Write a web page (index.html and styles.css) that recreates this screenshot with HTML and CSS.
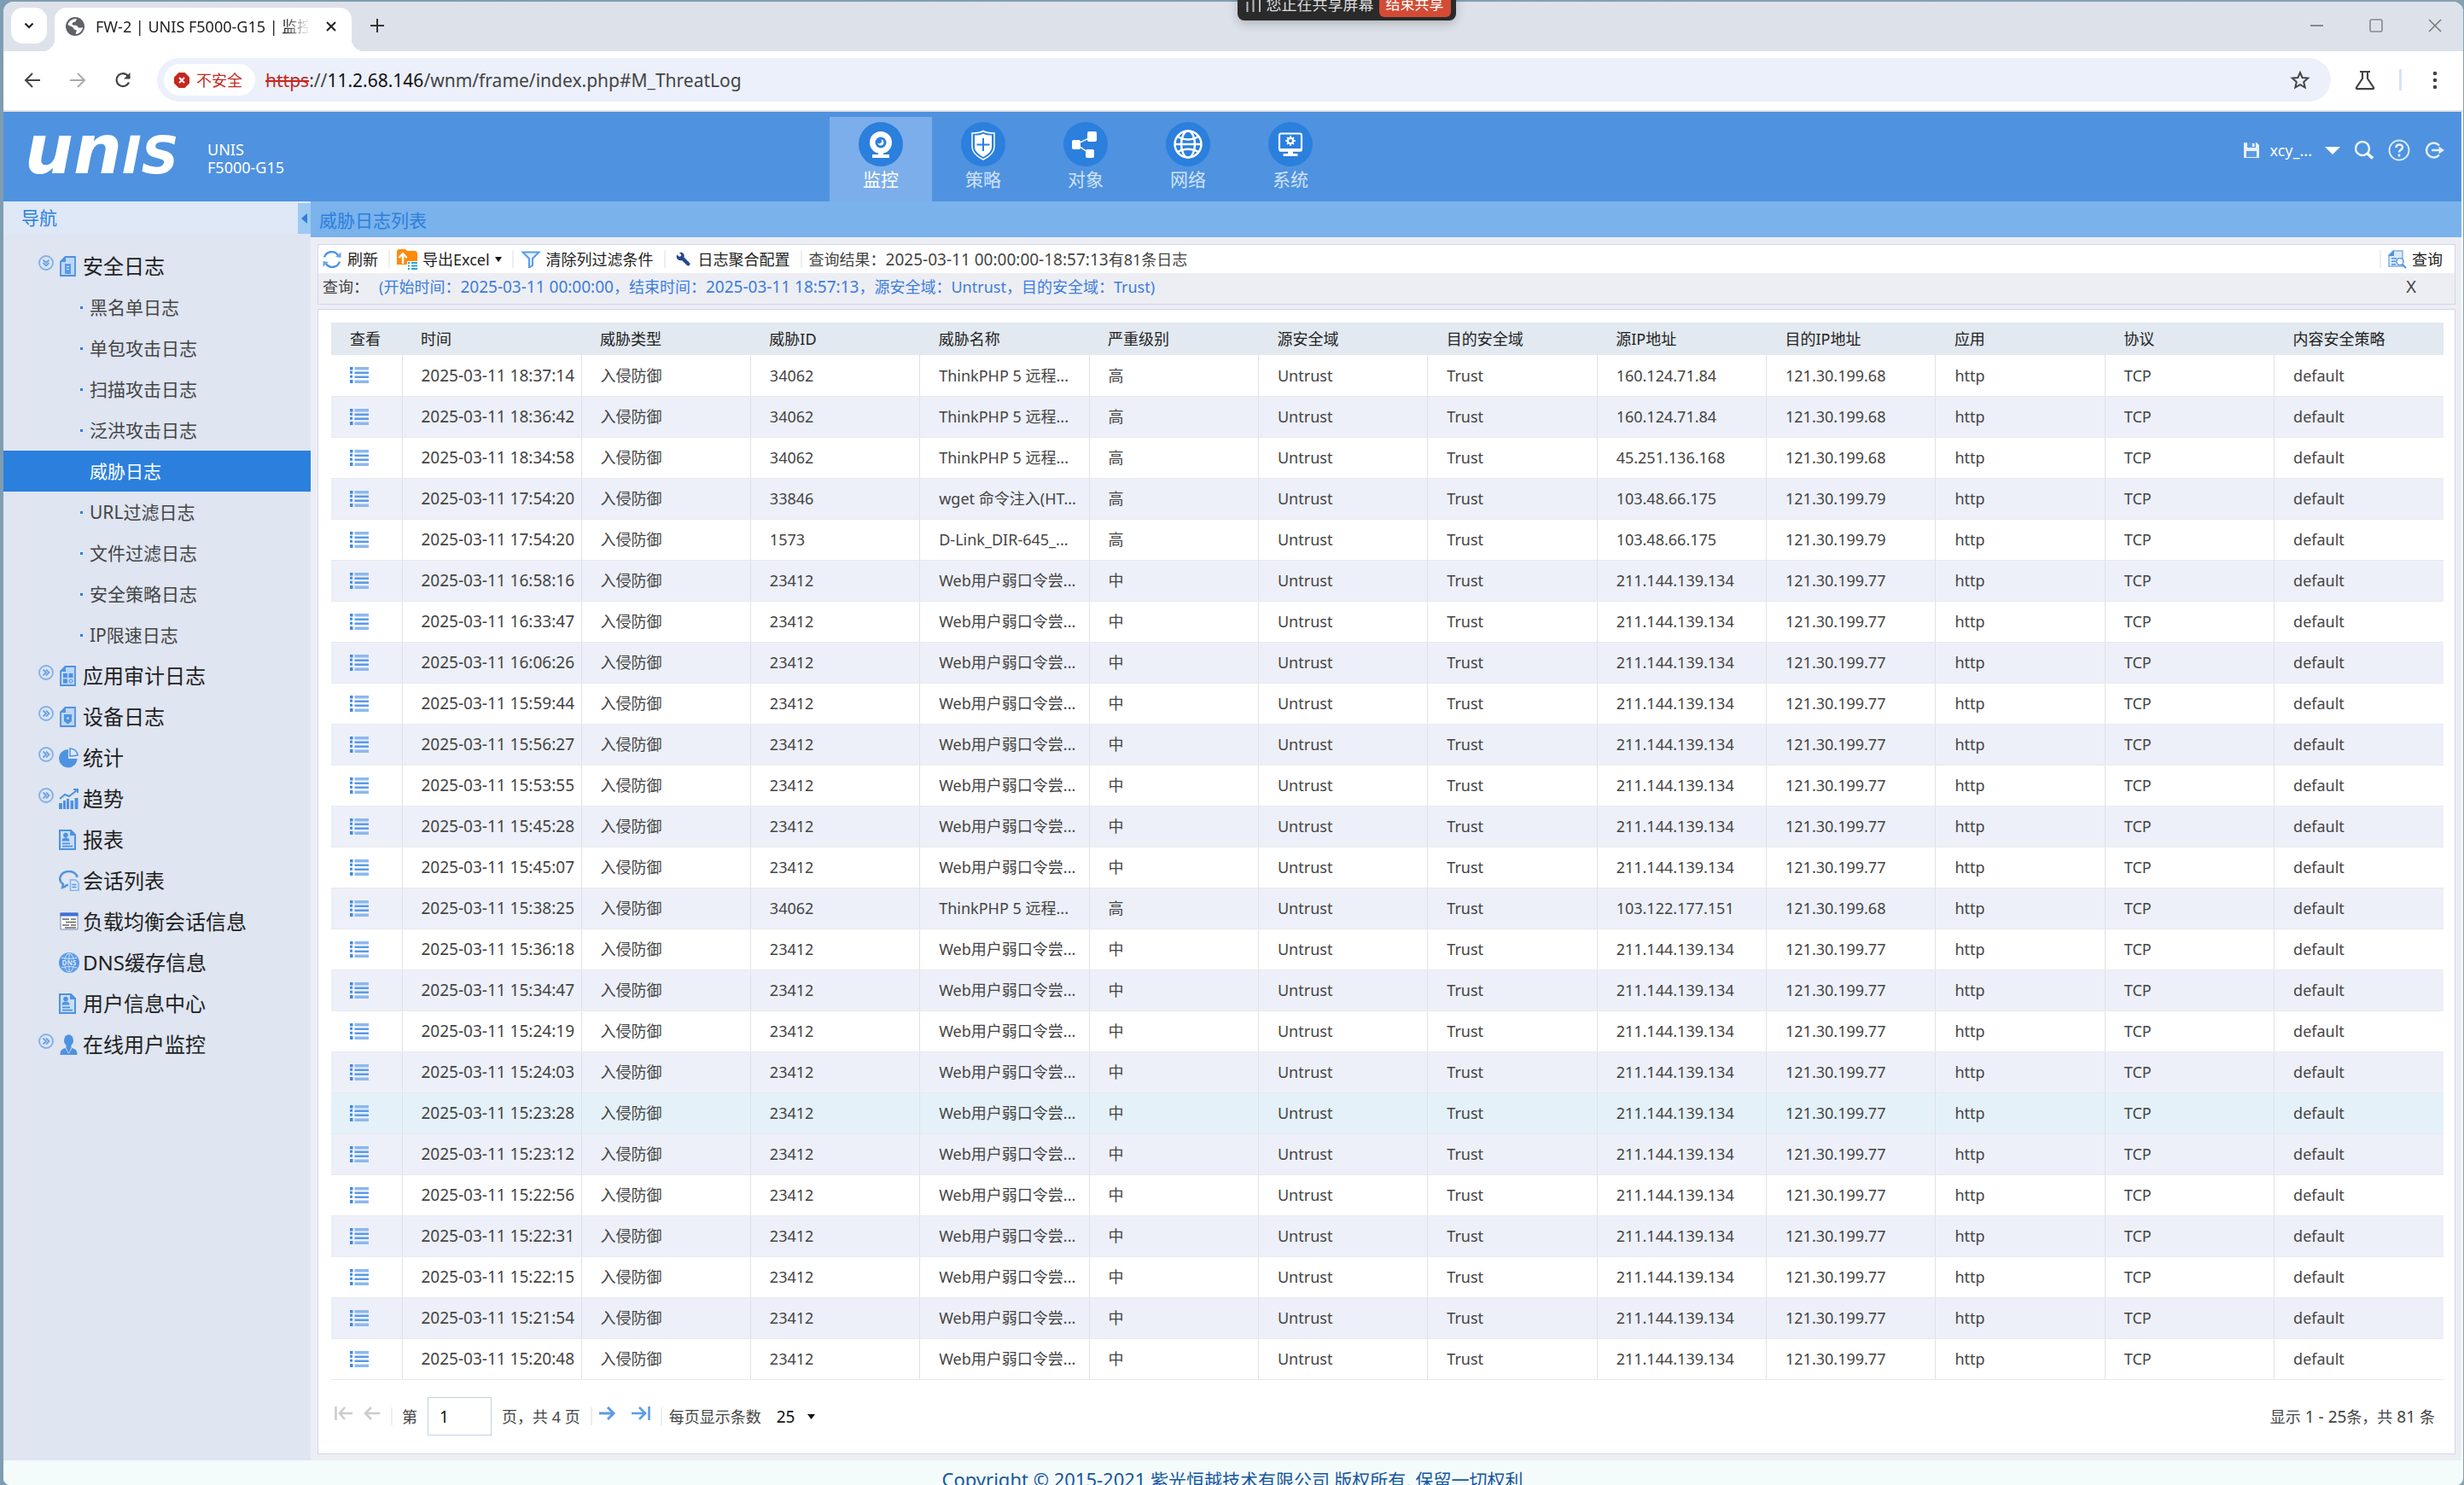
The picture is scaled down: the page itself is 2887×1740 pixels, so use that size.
FILE: index.html
```html
<!DOCTYPE html>
<html lang="zh-CN">
<head>
<meta charset="utf-8">
<title>FW-2 | UNIS F5000-G15 | 监控</title>
<link rel="stylesheet" href="styles.css">
</head>
<body>
<svg class="defs" aria-hidden="true">
  <symbol id="i-expand" viewBox="0 0 18 18"><circle cx="9" cy="9" r="8" fill="none" stroke="#7fb0ea" stroke-width="1.8"/><path d="M5.500 5.500 9 9l-3.500 3.500M9 5.500 12.500 9 9 12.500" fill="none" stroke="#6aa3e6" stroke-width="1.800"/></symbol>
  <symbol id="i-collapse" viewBox="0 0 18 18"><circle cx="9" cy="9" r="8" fill="none" stroke="#7fb0ea" stroke-width="1.8"/><path d="M5.500 5.500 9 9l3.500-3.500M5.500 9 9 12.500 12.500 9" fill="none" stroke="#6aa3e6" stroke-width="1.8"/></symbol>
  <symbol id="i-doc" viewBox="0 0 24 24"><path d="M7.500 1H19v22H2V6.500z" fill="#bfd7f5" stroke="#4f92e0" stroke-width="1.800"/><path d="M1.500 7 8 .5V7z" fill="#4f92e0"/></symbol>
  <symbol id="i-report" viewBox="0 0 24 24"><path d="M1 1h13l5 5v17H1z" fill="#c9def7" stroke="#4f92e0" stroke-width="2"/><path d="M13 0v7h7z" fill="#4f92e0"/><circle cx="8" cy="6.500" r="2.800" fill="#4f92e0"/><path d="M3.500 13.500c0-3 2-4 4.500-4s4.500 1 4.500 4zM4 15.500h9v1.800H4zM4 18.800h12v1.800H4z" fill="#4f92e0"/></symbol>
  <symbol id="i-list" viewBox="0 0 22 19"><path d="M0 0h3.500v3.500H0zM0 4.800h3v3H0zM0 9.800h3v3H0zM0 15h3.500v4H0z" fill="#3f8ae0"/><path d="M5.500 0h16.500v3.500H5.500zM5.500 15.500h16.500V19H5.500z" fill="#8db8ed"/><path d="M5.500 5.500h16.500v2.500H5.500zM5.500 10.500h16.500v2.500H5.500z" fill="#5b9ae6"/></symbol>
</svg>

<div class="window">
  <div class="tabstrip">
    <button class="tab-search" aria-label="搜索标签页"><svg width="12" height="12" viewBox="0 0 12 12"><path d="m1.500 3.500 4.500 4.500 4.500-4.500" fill="none" stroke="#222" stroke-width="2.200"/></svg></button>
    <div class="tab">
      <svg width="22" height="22" viewBox="0 0 22 22"><circle cx="11" cy="11" r="11" fill="#5f6368"/><path d="M13 2c-1 2.500-1 3.500-3.500 4-2 .5-2.500 2-1.500 3s2.500.5 4 .8c2 .4 2 2.200 3.500 2.700s4-.5 4.500 0c-1 4-4 7-8 7.500-1-2 1.500-3 .5-4.500-1-1-3-.5-3.500-2.500C8.500 11 4 10.500 2.500 9 3.500 4.500 8 1.500 13 2z" fill="#fff"/></svg>
      <span class="tab-title">FW-2 | UNIS F5000-G15 | 监控</span>
      <button class="plain" aria-label="关闭标签页"><svg width="14" height="14" viewBox="0 0 14 14"><path d="m2 2 10 10M12 2 2 12" stroke="#222" stroke-width="2"/></svg></button>
    </div>
    <button class="plain new-tab" aria-label="新标签页"><svg width="16" height="16" viewBox="0 0 16 16"><path d="M8 0v16M0 8h16" stroke="#333" stroke-width="2"/></svg></button>
    <div class="win-controls">
      <button class="plain" aria-label="最小化"><svg width="16" height="16" viewBox="0 0 16 16"><path d="M0 8h15" stroke="#888" stroke-width="2"/></svg></button>
      <button class="plain" aria-label="最大化"><svg width="16" height="16" viewBox="0 0 16 16"><rect x="1" y="1" width="14" height="14" rx="2" fill="none" stroke="#888" stroke-width="1.600"/></svg></button>
      <button class="plain" aria-label="关闭"><svg width="16" height="16" viewBox="0 0 16 16"><path d="m1 1 14 14M15 1 1 15" stroke="#777" stroke-width="1.500"/></svg></button>
    </div>
  </div>

  <div class="addressbar">
    <button class="plain" aria-label="后退"><svg width="20" height="20" viewBox="0 0 20 20"><path d="M19 10H2M10 2l-8 8 8 8" fill="none" stroke="#444" stroke-width="2"/></svg></button>
    <button class="plain" aria-label="前进"><svg width="20" height="20" viewBox="0 0 20 20"><path d="M1 10h17M10 2l8 8-8 8" fill="none" stroke="#aaa" stroke-width="2"/></svg></button>
    <button class="plain" aria-label="重新加载"><svg width="20" height="20" viewBox="0 0 20 20"><path d="M17 12.500A7.500 7.500 0 1 1 16 5l2 2.500" fill="none" stroke="#444" stroke-width="2.200"/><path d="M18.500 1v7.500H11z" fill="#444"/></svg></button>
    <div class="omnibox">
      <button class="chip"><svg width="18" height="18" viewBox="0 0 18 18"><path d="M5.500 0h7L18 5.500v7L12.500 18h-7L0 12.500v-7z" fill="#c5281f"/><path d="m6 6 6 6M12 6l-6 6" stroke="#fff" stroke-width="2"/></svg>不安全</button>
      <div class="url" role="textbox" aria-label="地址栏"><s>https</s>://<b>11.2.68.146</b>/wnm/frame/index.php#M_ThreatLog</div>
      <button class="plain" aria-label="收藏"><svg width="24" height="24" viewBox="0 0 24 24"><path d="m12 3 2.600 6 6.600.6-5 4.400 1.500 6.500L12 17.100l-5.700 3.400L7.800 14l-5-4.400L9.400 9z" fill="none" stroke="#444" stroke-width="2"/></svg></button>
    </div>
    <button class="plain flask" aria-label="实验"><svg width="24" height="24" viewBox="0 0 24 24"><path d="M6 2h12M9 2v8L2 20.500c-.5 1 0 1.700 1 1.700h18c1 0 1.500-.7 1-1.700L15 10V2" fill="none" stroke="#444" stroke-width="2.200"/></svg></button>
    <span class="tool-divider"></span>
    <button class="plain" aria-label="菜单"><svg width="6" height="22" viewBox="0 0 6 22"><g fill="#444"><circle cx="3" cy="3" r="2.300"/><circle cx="3" cy="11" r="2.300"/><circle cx="3" cy="19" r="2.300"/></g></svg></button>
  </div>

  <header class="app-header">
    <div class="brand">
      <div class="logo"><span class="logo-low">un</span><span class="logo-cap">IS</span></div>
      <div class="device">UNIS<br>F5000-G15</div>
    </div>
    <nav class="top-nav">
      <a href="#M" class="active"><svg width="52" height="52" viewBox="0 0 52 52"><circle cx="26" cy="26" r="26" fill="#2b7fdd"/><circle cx="26" cy="24" r="13" fill="#fff"/><circle cx="26" cy="24" r="6.500" fill="#2b7fdd"/><path d="M26 20.500a3.500 3.500 0 1 1-3.500 4 2.500 2.500 0 0 0 3.500-4z" fill="#fff"/><path d="M23 36h6v2h7v4H16v-4h7z" fill="#fff"/></svg>监控</a>
      <a href="#P"><svg width="52" height="52" viewBox="0 0 52 52"><circle cx="26" cy="26" r="26" fill="#2b7fdd"/><path d="M26 10.500c4 2.500 9 2.500 13 2.500v16c0 7-6 11.500-13 15-7-3.500-13-8-13-15V13c4 0 9 0 13-2.500z" fill="none" stroke="#fff" stroke-width="1.500"/><path d="M26 13.500c3 2 7 2 10 2V29c0 5-4 8.500-10 12-6-3.500-10-7-10-12V15.500c3 0 7 0 10-2z" fill="#fff"/><path d="M26 19v15M18.500 26.500h15" stroke="#2b7fdd" stroke-width="2"/></svg>策略</a>
      <a href="#O"><svg width="52" height="52" viewBox="0 0 52 52"><circle cx="26" cy="26" r="26" fill="#2b7fdd"/><path d="M34 17 15 26l16 11" fill="none" stroke="#fff" stroke-width="1.500"/><rect x="28" y="11" width="11" height="12" rx="2" fill="#fff"/><rect x="10" y="21" width="10" height="11" rx="2" fill="#fff"/><rect x="26" y="32" width="10" height="10" rx="2" fill="#fff"/></svg>对象</a>
      <a href="#N"><svg width="52" height="52" viewBox="0 0 52 52"><circle cx="26" cy="26" r="26" fill="#2b7fdd"/><g fill="none" stroke="#fff" stroke-width="2.500"><circle cx="26" cy="26" r="15.500"/><ellipse cx="26" cy="26" rx="8" ry="15.500"/><path d="M10.500 26h31M14 17c7 4.500 17 4.500 24 0M14 35c7-4.500 17-4.500 24 0"/></g></svg>网络</a>
      <a href="#S"><svg width="52" height="52" viewBox="0 0 52 52"><circle cx="26" cy="26" r="26" fill="#2b7fdd"/><rect x="13" y="13.500" width="26" height="20" rx="2" fill="none" stroke="#fff" stroke-width="2.200"/><path d="M13 31h26v3.500H13zM23 34h6v3h5.500v3h-17v-3H23z" fill="#fff"/><circle cx="26" cy="22" r="3.200" fill="none" stroke="#fff" stroke-width="2.400"/><path d="M26 16v12M20 22h12M22 18l8 8M30 18l-8 8" stroke="#fff" stroke-width="1.600"/><circle cx="26" cy="22" r="2" fill="#2b7fdd"/></svg>系统</a>
    </nav>
    <div class="user-tools">
      <button class="plain" aria-label="保存"><svg width="20" height="20" viewBox="0 0 20 20"><path d="M1 1h15l3 3v15H1z" fill="#e8f1fc"/><path d="M5 1h10v6H5zM4 11h12v7H4z" fill="#5c9ae3"/><path d="M11 2h2.500v4H11z" fill="#fff"/></svg></button>
      <button class="user">xcy_... <svg width="18" height="9" viewBox="0 0 18 9"><path d="M0 0h18L9 9z" fill="#fff"/></svg></button>
      <button class="plain" aria-label="搜索"><svg width="24" height="24" viewBox="0 0 24 24"><circle cx="10" cy="10" r="8" fill="none" stroke="#eaf3fd" stroke-width="2.500"/><path d="m16 16 6 5.500" stroke="#fff" stroke-width="3.500"/></svg></button>
      <button class="plain" aria-label="帮助"><svg width="26" height="26" viewBox="0 0 26 26"><circle cx="13" cy="13" r="11.500" fill="none" stroke="#d7e7fa" stroke-width="2"/><path d="M9.500 10c0-4.500 7.500-4.500 7.500-.5 0 3-4 3-4 6M13 17.500v3" fill="none" stroke="#e4effc" stroke-width="2.600"/></svg></button>
      <button class="plain" aria-label="退出"><svg width="24" height="22" viewBox="0 0 24 22"><path d="M18 5.500a8.500 8.500 0 1 0 0 11" fill="none" stroke="#e4effc" stroke-width="2.500"/><path d="M9 11h11" stroke="#e4effc" stroke-width="2.500"/><path d="m17.500 6.500 6.500 4.500-6.500 4.500z" fill="#e4effc"/></svg></button>
    </div>
  </header>

  <div class="app-body">
    <aside class="sidebar">
      <div class="sidebar-head"><span>导航</span><button class="fold" aria-label="收起导航"><svg width="7" height="12" viewBox="0 0 7 12"><path d="M7 0v12L0 6z" fill="#2b7fdd"/></svg></button></div>
      <nav class="tree">
        <a href="#log" class="node"><svg class="toggle"><use href="#i-collapse"/></svg><svg class="ico" viewBox="0 0 24 24"><use href="#i-doc"/><path d="M7 9h7v12H7z" fill="#5b9ae6"/><path d="M9 7.500h3V9H9zM9 12h3v1H9zM9 15h3v1H9z" fill="#dbe8f9"/></svg>安全日志</a>
        <a href="#l1" class="leaf">黑名单日志</a>
        <a href="#l2" class="leaf">单包攻击日志</a>
        <a href="#l3" class="leaf">扫描攻击日志</a>
        <a href="#l4" class="leaf">泛洪攻击日志</a>
        <a href="#M_ThreatLog" class="leaf current">威胁日志</a>
        <a href="#l6" class="leaf">URL过滤日志</a>
        <a href="#l7" class="leaf">文件过滤日志</a>
        <a href="#l8" class="leaf">安全策略日志</a>
        <a href="#l9" class="leaf">IP限速日志</a>
        <a href="#n2" class="node"><svg class="toggle"><use href="#i-expand"/></svg><svg class="ico" viewBox="0 0 24 24"><use href="#i-doc"/><path d="M5 9h5v5H5zM11.500 9h5v5h-5zM5 15.500h5v5H5z" fill="#4f92e0"/><circle cx="14" cy="18" r="2" fill="none" stroke="#4f92e0"/></svg>应用审计日志</a>
        <a href="#n3" class="node"><svg class="toggle"><use href="#i-expand"/></svg><svg class="ico" viewBox="0 0 24 24"><use href="#i-doc"/><path d="M6 9h9v8l-4.500 3.500L6 17z" fill="#4f92e0"/><circle cx="10.500" cy="13.500" r="1.500" fill="#bfd7f5"/></svg>设备日志</a>
        <a href="#n4" class="node"><svg class="toggle"><use href="#i-expand"/></svg><svg class="ico" viewBox="0 0 24 24"><path d="M11 2v11h10.500A10.700 10.700 0 1 1 11 2z" fill="#4f92e0"/><path d="M13 1c5 0 9 4 9 8l-9 1z" fill="#dfe9f8" stroke="#4f92e0" stroke-width="1.500"/></svg>统计</a>
        <a href="#n5" class="node"><svg class="toggle"><use href="#i-expand"/></svg><svg class="ico" viewBox="0 0 24 24"><path d="M0 17h4v7H0zM5 14h3v10H5zM9 12h3v12H9zM13.500 14h3.500v10h-3.500zM18.500 11h4v13h-4z" fill="#4f92e0"/><path d="m1 12 6-5 5 2 9-7M17 1h5v4" fill="none" stroke="#4f92e0" stroke-width="2"/></svg>趋势</a>
        <a href="#n6" class="node solo"><svg class="ico"><use href="#i-report"/></svg>报表</a>
        <a href="#n7" class="node solo"><svg class="ico" viewBox="0 0 24 24"><path d="M11 17c-2 0-3 0-4 2l-3 1 1-4C-3 10 3 1 12 1c5 0 9 3 9.500 7" fill="none" stroke="#4f92e0" stroke-width="2.400"/><path d="M13.500 11h6l3.500 3.500v9h-9.500z" fill="#dbe8f9" stroke="#7fb0ea" stroke-width="1.500"/><path d="M15.500 16.500h5M15.500 19.500h5" stroke="#4f92e0" stroke-width="1.500"/></svg>会话列表</a>
        <a href="#n8" class="node solo"><svg class="ico" viewBox="0 0 24 24"><path d="M2 2h20v19H2z" fill="#fff" stroke="#7189b5"/><path d="M1.500 1.500h21v4h-21z" fill="#3f6fd6"/><path d="M4 9h8M14 9h6M8 12.500h12M4 16h8M14 16h6M7 19h13" stroke="#666" stroke-width="1.600"/></svg>负载均衡会话信息</a>
        <a href="#n9" class="node solo"><svg class="ico" viewBox="0 0 24 24"><circle cx="12" cy="12" r="12" fill="#5f9de6"/><g fill="none" stroke="#cfe1f8" stroke-width="1"><ellipse cx="12" cy="12" rx="5.500" ry="11"/><path d="M12 1v22M3 6c6 2 12 2 18 0M3 18c6-2 12-2 18 0"/></g><path d="M1 8.500h22v7H1z" fill="#4f92e0"/><text x="12" y="15" font-size="8" font-weight="700" text-anchor="middle" fill="#dfe9f8">DNS</text></svg>DNS缓存信息</a>
        <a href="#n10" class="node solo"><svg class="ico"><use href="#i-report"/></svg>用户信息中心</a>
        <a href="#n11" class="node"><svg class="toggle"><use href="#i-expand"/></svg><svg class="ico" viewBox="0 0 24 24"><ellipse cx="11.500" cy="7" rx="5.500" ry="6.800" fill="#4f92e0"/><path d="M8.500 12h6v4l-3 6-3-6z" fill="#4f92e0"/><path d="M1.500 24c0-5 2-7 6-8l4 7 4-7c4 1 6 3 6 8z" fill="#4f92e0"/></svg>在线用户监控</a>
      </nav>
    </aside>

    <main class="content">
      <h1 class="page-title">威胁日志列表</h1>
      <section class="tools">
        <div class="toolbar">
          <button class="tool"><svg width="24" height="22" viewBox="0 0 24 22"><path d="M3 8.500A9 9 0 0 1 19 6M21 13.500A9 9 0 0 1 5 16" fill="none" stroke="#4f92e0" stroke-width="2.400"/><path d="m16 8 6.500 1V2.500zM8 14l-6.500-1v6.500z" fill="#6aa5ea"/></svg>刷新</button>
          <span class="sep"></span>
          <button class="tool"><svg width="24" height="24" viewBox="0 0 24 24"><path d="M0 2 2 0h8l2 2h10l2 2v14H0z" fill="#ff8a0c"/><path d="M7 17V6M2.500 10 7 5l4.500 5" fill="none" stroke="#fff" stroke-width="2.400"/><path d="M12 14h12v10H12z" fill="#fff"/><path d="M13 16h2M17 16h7M13 19.500h2M17 19.500h7M13 23h2M17 23h7" stroke="#28a3e0" stroke-width="2"/></svg>导出Excel<svg width="8" height="6" viewBox="0 0 8 6"><path d="M0 0h8L4 6z" fill="#111"/></svg></button>
          <span class="sep"></span>
          <button class="tool"><svg width="24" height="20" viewBox="0 0 24 20"><path d="M2.500 1.500h19L14 9v8l-4 2.500V9z" fill="#e6f1fd" stroke="#5b9ce6" stroke-width="2"/></svg>清除列过滤条件</button>
          <span class="sep"></span>
          <button class="tool"><svg width="24" height="18" viewBox="0 0 24 18"><path d="M5 3.500 8.500 6l2-2L8 1c4-1 6.500 2 5.500 5.500L20 13c1.500 2-1 4.500-3 3l-6-6C7 11 3.500 8 5 3.500z" fill="#27458f"/></svg>日志聚合配置</button>
          <span class="sep"></span>
          <span>查询结果：<span class="num">2025-03-11 00:00:00-18:57:13</span>有81条日志</span>
          <span class="spacer"></span>
          <span class="sep"></span>
          <button class="tool"><svg width="22" height="22" viewBox="0 0 22 22"><path d="M6 1h11v18H1V6z" fill="#dce9fa" stroke="#7fb0ea" stroke-width="1.500"/><path d="M0 7 7 0v7zM4 9h6v1.500H4zM4 12.500h5V14H4zM4 16h5v1.500H4z" fill="#4f92e0"/><circle cx="14" cy="13.500" r="4" fill="#fff" stroke="#5b9ce6" stroke-width="1.600"/><path d="m17 17 4 4" stroke="#4f92e0" stroke-width="2"/></svg>查询</button>
        </div>
        <div class="query">
          <span>查询：</span>
          <span class="terms">(开始时间：<span class="num">2025-03-11 00:00:00</span>，结束时间：<span class="num">2025-03-11 18:57:13</span>，源安全域：Untrust，目的安全域：Trust)</span>
          <button class="plain clear">X</button>
        </div>
      </section>

      <section class="grid">
        <table>
          <colgroup><col class="c-view"><col class="c-time"><col span="11"></colgroup>
          <thead><tr><th>查看</th><th>时间</th><th>威胁类型</th><th>威胁ID</th><th>威胁名称</th><th>严重级别</th><th>源安全域</th><th>目的安全域</th><th>源IP地址</th><th>目的IP地址</th><th>应用</th><th>协议</th><th>内容安全策略</th></tr></thead>
          <tbody id="rows"></tbody>
        </table>
        <div class="pager">
          <button class="plain" aria-label="第一页"><svg width="22" height="16" viewBox="0 0 22 16"><path d="M1.500 0v16M21 8H7M12 1 6 8l6 7" fill="none" stroke="#ccc" stroke-width="2.600"/></svg></button>
          <button class="plain prev" aria-label="上一页"><svg width="20" height="16" viewBox="0 0 20 16"><path d="M19 8H3M9 1 2 8l7 7" fill="none" stroke="#ccc" stroke-width="2.600"/></svg></button>
          <span class="sep"></span>
          <label for="page">第</label>
          <input id="page" type="text" value="1">
          <span class="total">页，共 4 页</span>
          <span class="sep"></span>
          <button class="plain" aria-label="下一页"><svg width="20" height="16" viewBox="0 0 20 16"><path d="M0 8h17M10 1l7 7-7 7" fill="none" stroke="#5b9ce6" stroke-width="3"/></svg></button>
          <button class="plain last" aria-label="最后一页"><svg width="22" height="16" viewBox="0 0 22 16"><path d="M0 8h14M9 1l7 7-7 7M20.500 0v16" fill="none" stroke="#5b9ce6" stroke-width="2.600"/></svg></button>
          <span class="sep"></span>
          <label for="size">每页显示条数</label>
          <span class="size-box"><select id="size"><option>25</option><option>50</option></select><svg width="9" height="6" viewBox="0 0 9 6"><path d="M0 0h9L4.500 6z" fill="#111"/></svg></span>
          <span class="range">显示<span class="num"> 1 - 25</span>条，共<span class="num"> 81 </span>条</span>
        </div>
      </section>
    </main>
  </div>
  <footer class="copyright"><span class="latin">Copyright © 2015-2021</span> 紫光恒越技术有限公司 版权所有, 保留一切权利</footer>
</div>

<div class="share">
  <svg width="18" height="18" viewBox="0 0 18 18"><path d="M1.500 6v12M8.500 0v18M16 0v18" stroke="#bbb" stroke-width="2"/></svg>
  <span>您正在共享屏幕</span>
  <button>结束共享</button>
</div>
<script src="script.js"></script>
</body>
</html>
```
FILE: styles.css
```css
* { box-sizing: border-box; }

body {
  margin: 0;
  height: 100vh;
  padding: 2px 1px 0 4px;
  overflow: hidden;
  background: linear-gradient(90deg, #7f9db2, #86a0b0);
  font-family: "Noto Sans", "Noto Sans CJK SC", sans-serif;
  font-size: 18px;
  line-height: 24px;
  color: #444;
}

svg { display: block; flex: none; }
.defs { position: absolute; width: 0; height: 0; }
a { color: inherit; text-decoration: none; }
button, input, select { font: inherit; color: inherit; }
button { border: 0; padding: 0; background: none; flex: none; }
.plain { display: flex; align-items: center; }
.num { font-size: 19px; }

.window {
  display: flex;
  flex-direction: column;
  height: 100%;
  border-radius: 12px 12px 8px 8px;
  overflow: hidden;
  background: #fff;
}

/* Browser chrome */
.tabstrip {
  display: flex;
  align-items: flex-start;
  height: 58px;
  flex: none;
  padding: 7px 25px 0 9px;
  background: #dde2ea;
}
.tab-search {
  display: flex;
  align-items: center;
  justify-content: center;
  width: 42px;
  height: 42px;
  margin-right: 9px;
  border-radius: 14px;
  background: #fff;
}
.tab {
  position: relative;
  display: flex;
  align-items: center;
  width: 348px;
  height: 51px;
  padding: 0 17px 8px 13px;
  border-radius: 14px 14px 0 0;
  background: #fff;
}
.tab::before, .tab::after {
  content: "";
  position: absolute;
  bottom: 0;
  width: 14px;
  height: 14px;
}
.tab::before { right: 100%; background: radial-gradient(circle at 0 0, transparent 14px, #fff 14px); }
.tab::after { left: 100%; background: radial-gradient(circle at 100% 0, transparent 14px, #fff 14px); }
.tab-title {
  flex: 1;
  margin: 0 18px 0 13px;
  overflow: hidden;
  white-space: nowrap;
  color: #222;
  -webkit-mask-image: linear-gradient(90deg, #000 88%, transparent);
  mask-image: linear-gradient(90deg, #000 88%, transparent);
}
.new-tab { height: 42px; margin-left: 22px; }
.win-controls { display: flex; height: 42px; gap: 53px; margin-left: auto; }

.addressbar {
  display: flex;
  align-items: center;
  height: 71px;
  flex: none;
  padding: 0 30px 2px 24px;
  border-bottom: 2px solid #e2e2e4;
  background: #fff;
}
.addressbar > .plain { margin-right: 33px; }
.omnibox {
  display: flex;
  flex: 1;
  align-items: center;
  height: 51px;
  padding: 0 24px 0 8px;
  border-radius: 26px;
  margin-left: -3px;
  background: #ebf0fa;
}
.chip {
  display: flex;
  align-items: center;
  gap: 8px;
  height: 37px;
  padding: 0 15px 0 12px;
  border-radius: 19px;
  background: #fff;
  color: #c5281f;
}
.url { flex: 1; margin-left: 12px; font-size: 21px; line-height: 30px; }
.url s { color: #c5281f; }
.url b { font-weight: 400; color: #111; }
.addressbar > .flask { margin: 0 28px; }
.tool-divider { width: 3px; height: 25px; margin-right: 36px; background: #d3e3fd; }
.addressbar > .plain:last-child { margin-right: 0; }

/* Product header */
.app-header {
  display: grid;
  grid-template-columns: 968px 1fr auto;
  height: 105px;
  flex: none;
  margin-right: 2px;
  background: #4f92e0;
  color: #fff;
}
.brand { display: flex; align-items: center; padding: 4px 0 0 25px; }
.logo {
  display: flex;
  align-items: baseline;
  width: 214px;
  padding-bottom: 14px;
  line-height: 60px;
  font-family: "DejaVu Sans", sans-serif;
  font-style: italic;
  font-weight: 700;
}
.logo-low { font-size: 80px; }
.logo-cap { font-size: 61px; }
.device { line-height: 21px; }
.top-nav { display: flex; align-items: flex-end; }
.top-nav a {
  display: flex;
  flex-direction: column;
  align-items: center;
  width: 120px;
  height: 99px;
  padding-top: 6px;
  font-size: 21px;
  line-height: 30px;
  color: #cfe2f8;
}
.top-nav .active { background: #7baeea; color: #fff; }
.user-tools { display: flex; align-items: flex-start; gap: 16px; padding: 32px 20px 0 0; }
.user-tools > * { height: 26px; }
.user { display: flex; align-items: center; gap: 15px; margin-left: -4px; }

/* Body */
.app-body { display: flex; flex: none; margin-right: 2px; background: #edeef4; }
.sidebar { width: 360px; flex: none; background: #dfe5f1; }
.sidebar-head {
  display: flex;
  justify-content: space-between;
  height: 39px;
  padding: 2px 0 1px 21px;
  background: #dee8f7;
  font-size: 21px;
  line-height: 35px;
  color: #2b7fdd;
}
.fold { display: flex; align-items: center; justify-content: center; width: 15px; background: #9dcaf3; }
.tree { padding-top: 13px; }
.node {
  display: flex;
  align-items: center;
  height: 48px;
  padding-left: 41px;
  font-size: 24px;
  color: #222;
}
.solo { padding-left: 65px; }
.toggle { width: 18px; height: 18px; margin: 0 6px 8px 0; }
.ico { width: 24px; height: 24px; margin-right: 4px; }
.leaf {
  display: flex;
  align-items: center;
  gap: 8px;
  height: 48px;
  padding-left: 90px;
  font-size: 21px;
}
.leaf::before { content: ""; width: 3px; height: 3px; background: #2b7fdd; }
.current { background: #2b7fdd; color: #fff; }

.content { flex: 1; min-width: 0; padding-bottom: 7px; }
.page-title {
  height: 42px;
  margin: 0 0 8px;
  padding-left: 10px;
  background: #7ab2eb;
  font-size: 21px;
  line-height: 44px;
  font-weight: 400;
  color: #2b7fdd;
}
.tools, .grid { margin: 0 7px 5px 8px; border: 1px solid #d0d6ea; }
.toolbar {
  display: flex;
  align-items: center;
  height: 33px;
  padding: 0 14px 0 4px;
  background: #fff;
  white-space: nowrap;
}
.tool { display: flex; align-items: center; gap: 6px; color: #222; }
.sep { width: 2px; height: 21px; margin: 0 8px 0 12px; background: #eee; }
.spacer { flex: 1; }
.query { display: flex; align-items: center; height: 36px; padding: 0 45px 5px 5px; }
.terms { margin-left: 12px; color: #3b7ddd; }
.clear { margin-left: auto; font-size: 20px; }

.grid { padding: 15px 13px 0 15px; margin-bottom: 0; background: #fff; }
table { width: 100%; table-layout: fixed; border-collapse: collapse; text-align: left; }
.c-view { width: 83px; }
.c-time { width: 210px; }
th { height: 38px; padding: 0 0 0 22px; background: #e2e9f0; font-weight: 400; color: #222; }
td {
  height: 48px;
  padding: 0 0 0 22px;
  border-right: 1px solid #dfe2e6;
  border-bottom: 1px solid #e8eaed;
  white-space: nowrap;
}
td:nth-child(2) { font-size: 19px; }
td:last-child { border-right: 0; }
tbody tr:nth-child(even) { background: #edf0f8; }
tbody tr.hover { background: #e4f1f8; }

.pager { display: flex; align-items: center; height: 86px; padding: 0 10px 0 4px; }
.pager .plain { margin-bottom: 8px; }
.pager .prev { margin-left: 12px; }
.pager .last { margin-left: 18px; }
.pager label:first-of-type { margin-left: 3px; }
.pager input {
  width: 75px;
  height: 45px;
  margin: 0 12px;
  padding: 0 13px;
  border: 1px solid #c2d0e4;
  font-size: 19px;
  color: #111;
}
.total { white-space: nowrap; }
.size-box { display: flex; align-items: center; margin-left: 18px; color: #111; }
.size-box select { width: 36px; border: 0; padding: 0; background: none; appearance: none; font-size: 19px; }
.range { margin-left: auto; white-space: pre; }

.copyright {
  flex: 1;
  padding-top: 8px;
  margin-right: 2px;
  background: #f4fbfb;
  font-size: 21px;
  line-height: 28px;
  text-align: center;
  color: #17579c;
}
.latin { font-size: 22px; }

/* Screen sharing notice floating above the window */
.share {
  position: absolute;
  top: -14px;
  left: 50%;
  display: flex;
  align-items: center;
  width: 256px;
  height: 38px;
  margin-left: 6px;
  padding: 0 6px 0 10px;
  gap: 6px;
  border-radius: 8px;
  background: #2a2a2a;
  color: #ddd;
  white-space: nowrap;
  box-shadow: 0 4px 12px #0003;
}
.share button { height: 30px; padding: 0 8px; border-radius: 6px; background: #d34b34; font-size: 17px; color: #fff; }
```
FILE: script.js
```js
const WEB = [23412, "Web用户弱口令尝...", "中", "211.144.139.134", "121.30.199.77"];
const PHP = (src) => [34062, "ThinkPHP 5 远程...", "高", src, "121.30.199.68"];

const logs = [
  ["18:37:14", PHP("160.124.71.84")],
  ["18:36:42", PHP("160.124.71.84")],
  ["18:34:58", PHP("45.251.136.168")],
  ["17:54:20", [33846, "wget 命令注入(HT...", "高", "103.48.66.175", "121.30.199.79"]],
  ["17:54:20", [1573, "D-Link_DIR-645_...", "高", "103.48.66.175", "121.30.199.79"]],
  ...["16:58:16", "16:33:47", "16:06:26", "15:59:44", "15:56:27", "15:53:55", "15:45:28", "15:45:07"].map((t) => [t, WEB]),
  ["15:38:25", PHP("103.122.177.151")],
  ...["15:36:18", "15:34:47", "15:24:19", "15:24:03", "15:23:28", "15:23:12", "15:22:56", "15:22:31", "15:22:15", "15:21:54", "15:20:48"].map((t) => [t, WEB]),
];

const view = '<button class="plain" aria-label="查看"><svg width="22" height="19"><use href="#i-list"/></svg></button>';

document.getElementById("rows").innerHTML = logs.map(([time, [id, name, level, src, dst]]) => {
  const cells = [view, "2025-03-11 " + time, "入侵防御", id, name, level, "Untrust", "Trust", src, dst, "http", "TCP", "default"];
  const cls = time === "15:23:28" ? ' class="hover"' : "";
  return `<tr${cls}>${cells.map((c) => `<td>${c}</td>`).join("")}</tr>`;
}).join("");
```
